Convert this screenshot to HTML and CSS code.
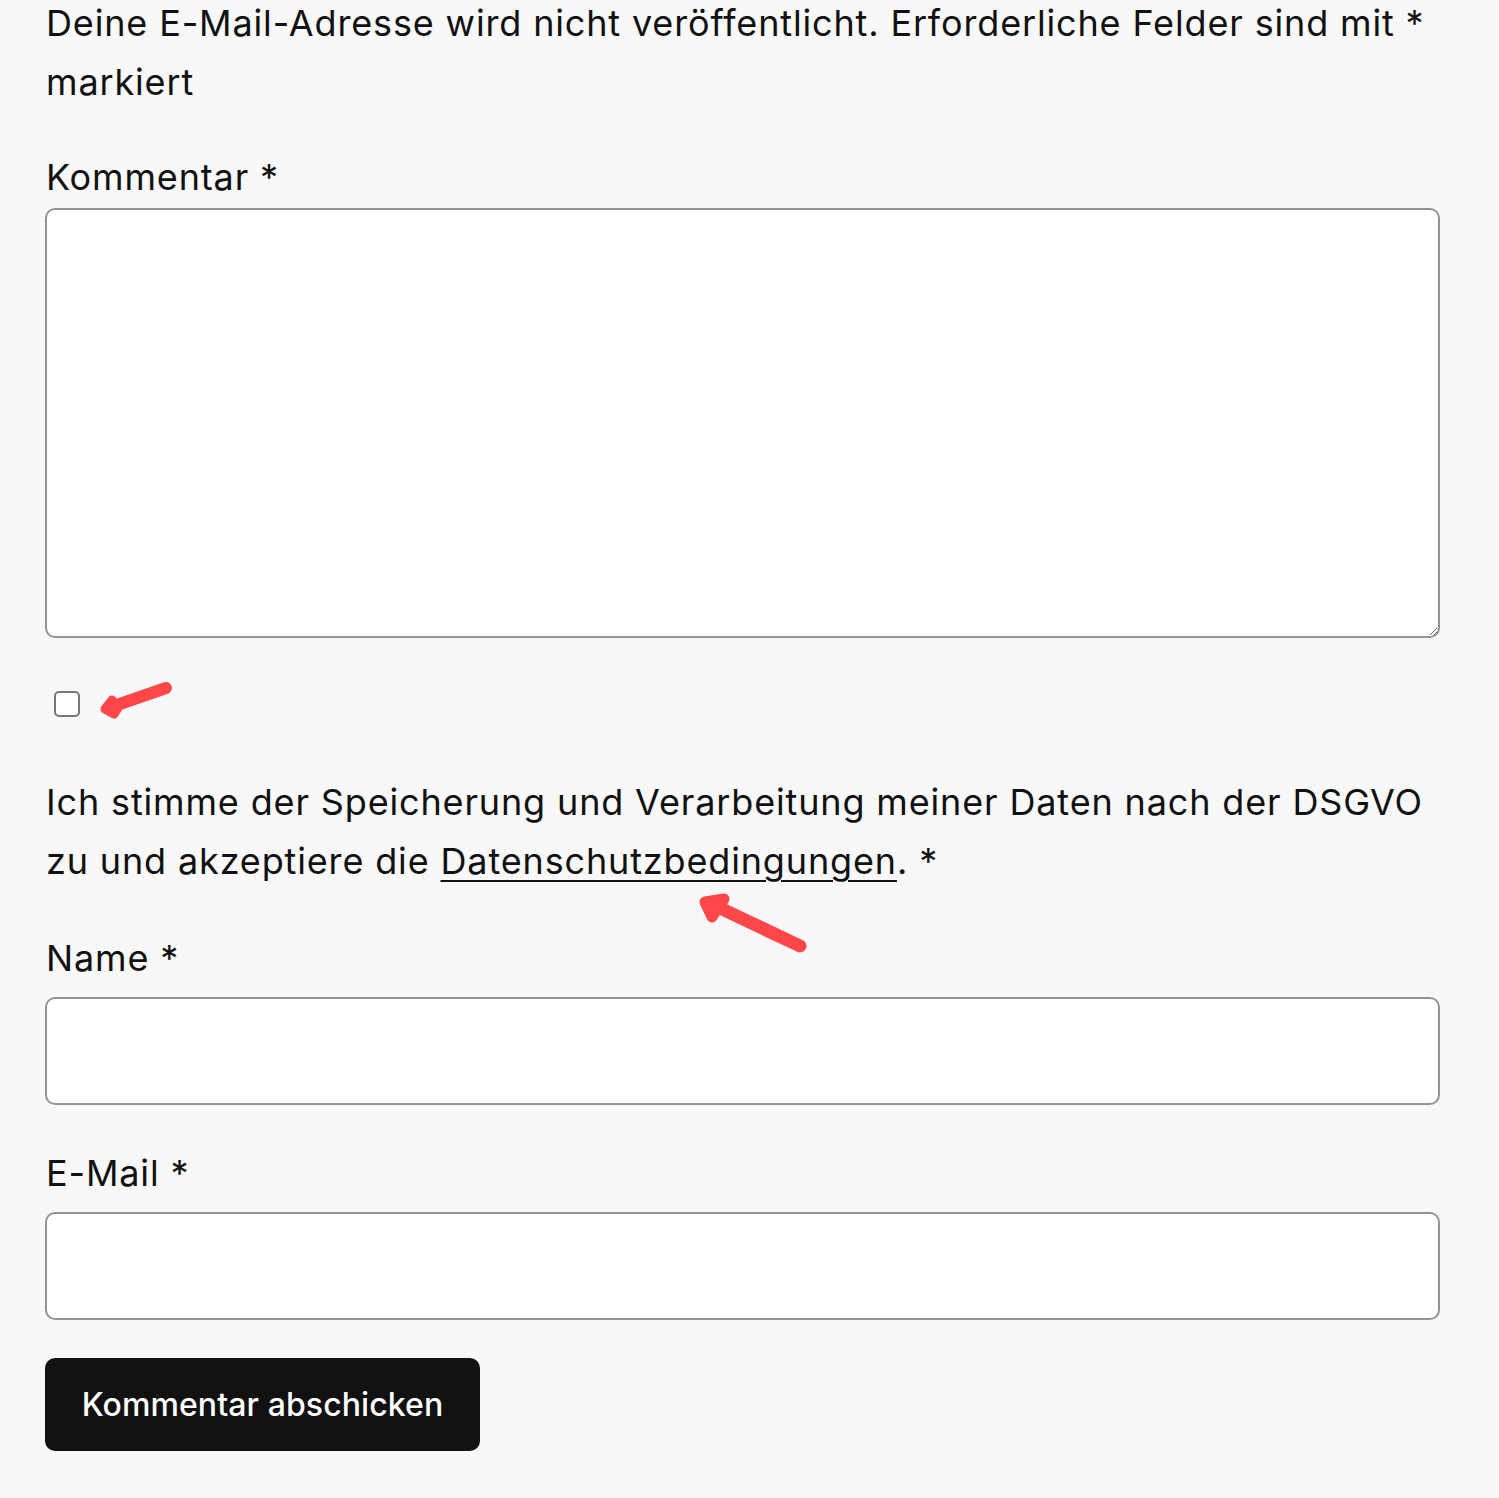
FILE: index.html
```html
<!DOCTYPE html>
<html lang="de">
<head>
<meta charset="utf-8">
<title>Kommentar</title>
<link rel="stylesheet" href="styles.css">
</head>
<body>
<form class="comment-form">
  <p class="notice">Deine E-Mail-Adresse wird nicht veröffentlicht. Erforderliche Felder sind mit * markiert</p>
  <label class="field-label label-comment" for="comment">Kommentar *</label>
  <textarea id="comment" class="textarea"></textarea>
  <div class="consent-check">
    <input type="checkbox" class="checkbox" aria-label="Zustimmung">
  </div>
  <p class="consent">Ich stimme der Speicherung und Verarbeitung meiner Daten nach der DSGVO zu und akzeptiere die <a href="#" class="link">Datenschutzbedingungen</a>. *</p>
  <label class="field-label label-name" for="name">Name *</label>
  <input id="name" class="input" type="text">
  <label class="field-label label-mail" for="email">E-Mail *</label>
  <input id="email" class="input" type="email">
  <button type="button" class="submit">Kommentar abschicken</button>
</form>

<svg class="arrow arrow-one" width="90" height="50" viewBox="0 0 90 50" aria-hidden="true">
  <path d="M20 30 L72 12" stroke="#ff4649" stroke-width="12" stroke-linecap="round" fill="none"/>
  <path d="M11 33 L18 24 L24 32 L20 38 Z" fill="#ff4649" stroke="#ff4649" stroke-width="9" stroke-linejoin="round"/>
</svg>
<svg class="arrow arrow-two" width="130" height="80" viewBox="0 0 130 80" aria-hidden="true">
  <path d="M30 21 L108 58" stroke="#ff4649" stroke-width="13" stroke-linecap="round" fill="none"/>
  <path d="M13 14 L32 11 L20 29 Z" fill="#ff4649" stroke="#ff4649" stroke-width="11" stroke-linejoin="round"/>
</svg>
</body>
</html>
```
FILE: styles.css
```css
html, body {
  margin: 0;
  padding: 0;
}
body {
  background: #f8f8f8;
  color: #111111;
  font-family: Inter, "Noto Sans", "Liberation Sans", sans-serif;
  font-size: 36px;
  line-height: 59px;
  letter-spacing: 0.85px;
  position: relative;
  min-height: 1498px;
}
.comment-form {
  display: flex;
  flex-direction: column;
  align-items: flex-start;
  width: 1393px;
  margin-left: 46px;
  margin-top: -6px;
}
.notice {
  margin: 0;
}
.field-label {
  display: block;
}
.label-comment {
  margin-top: 36px;
}
.textarea {
  box-sizing: border-box;
  width: 1395px;
  height: 430px;
  margin-top: 1px;
  margin-left: -1px;
  border: 2px solid #949494;
  border-radius: 10px;
  background: #ffffff;
  font: inherit;
  resize: vertical;
  outline: none;
}
.consent-check {
  margin-top: 53px;
  padding-left: 8px;
  display: flex;
}
.checkbox {
  appearance: none;
  -webkit-appearance: none;
  box-sizing: border-box;
  width: 26px;
  height: 26px;
  margin: 0;
  border: 2px solid #767676;
  border-radius: 5px;
  background: #ffffff;
}
.consent {
  margin: 56px 0 0;
}
.link {
  color: #111111;
  text-decoration: underline;
  text-decoration-thickness: 2px;
  text-underline-offset: 6px;
}
.label-name {
  margin-top: 38px;
}
.label-mail {
  margin-top: 39px;
}
.input {
  box-sizing: border-box;
  width: 1395px;
  height: 108px;
  margin-top: 9px;
  margin-left: -1px;
  border: 2px solid #949494;
  border-radius: 10px;
  background: #ffffff;
  font: inherit;
  outline: none;
}
.submit {
  margin-top: 38px;
  margin-left: -1px;
  width: 435px;
  height: 93px;
  border: none;
  border-radius: 10px;
  background: #111111;
  color: #ffffff;
  font-family: Inter, "Noto Sans", "Liberation Sans", sans-serif;
  font-size: 32px;
  font-weight: 500;
  letter-spacing: 0.1px;
  cursor: pointer;
}
.arrow {
  position: absolute;
}
.arrow-one {
  left: 94px;
  top: 676px;
}
.arrow-two {
  left: 692px;
  top: 888px;
}
```
